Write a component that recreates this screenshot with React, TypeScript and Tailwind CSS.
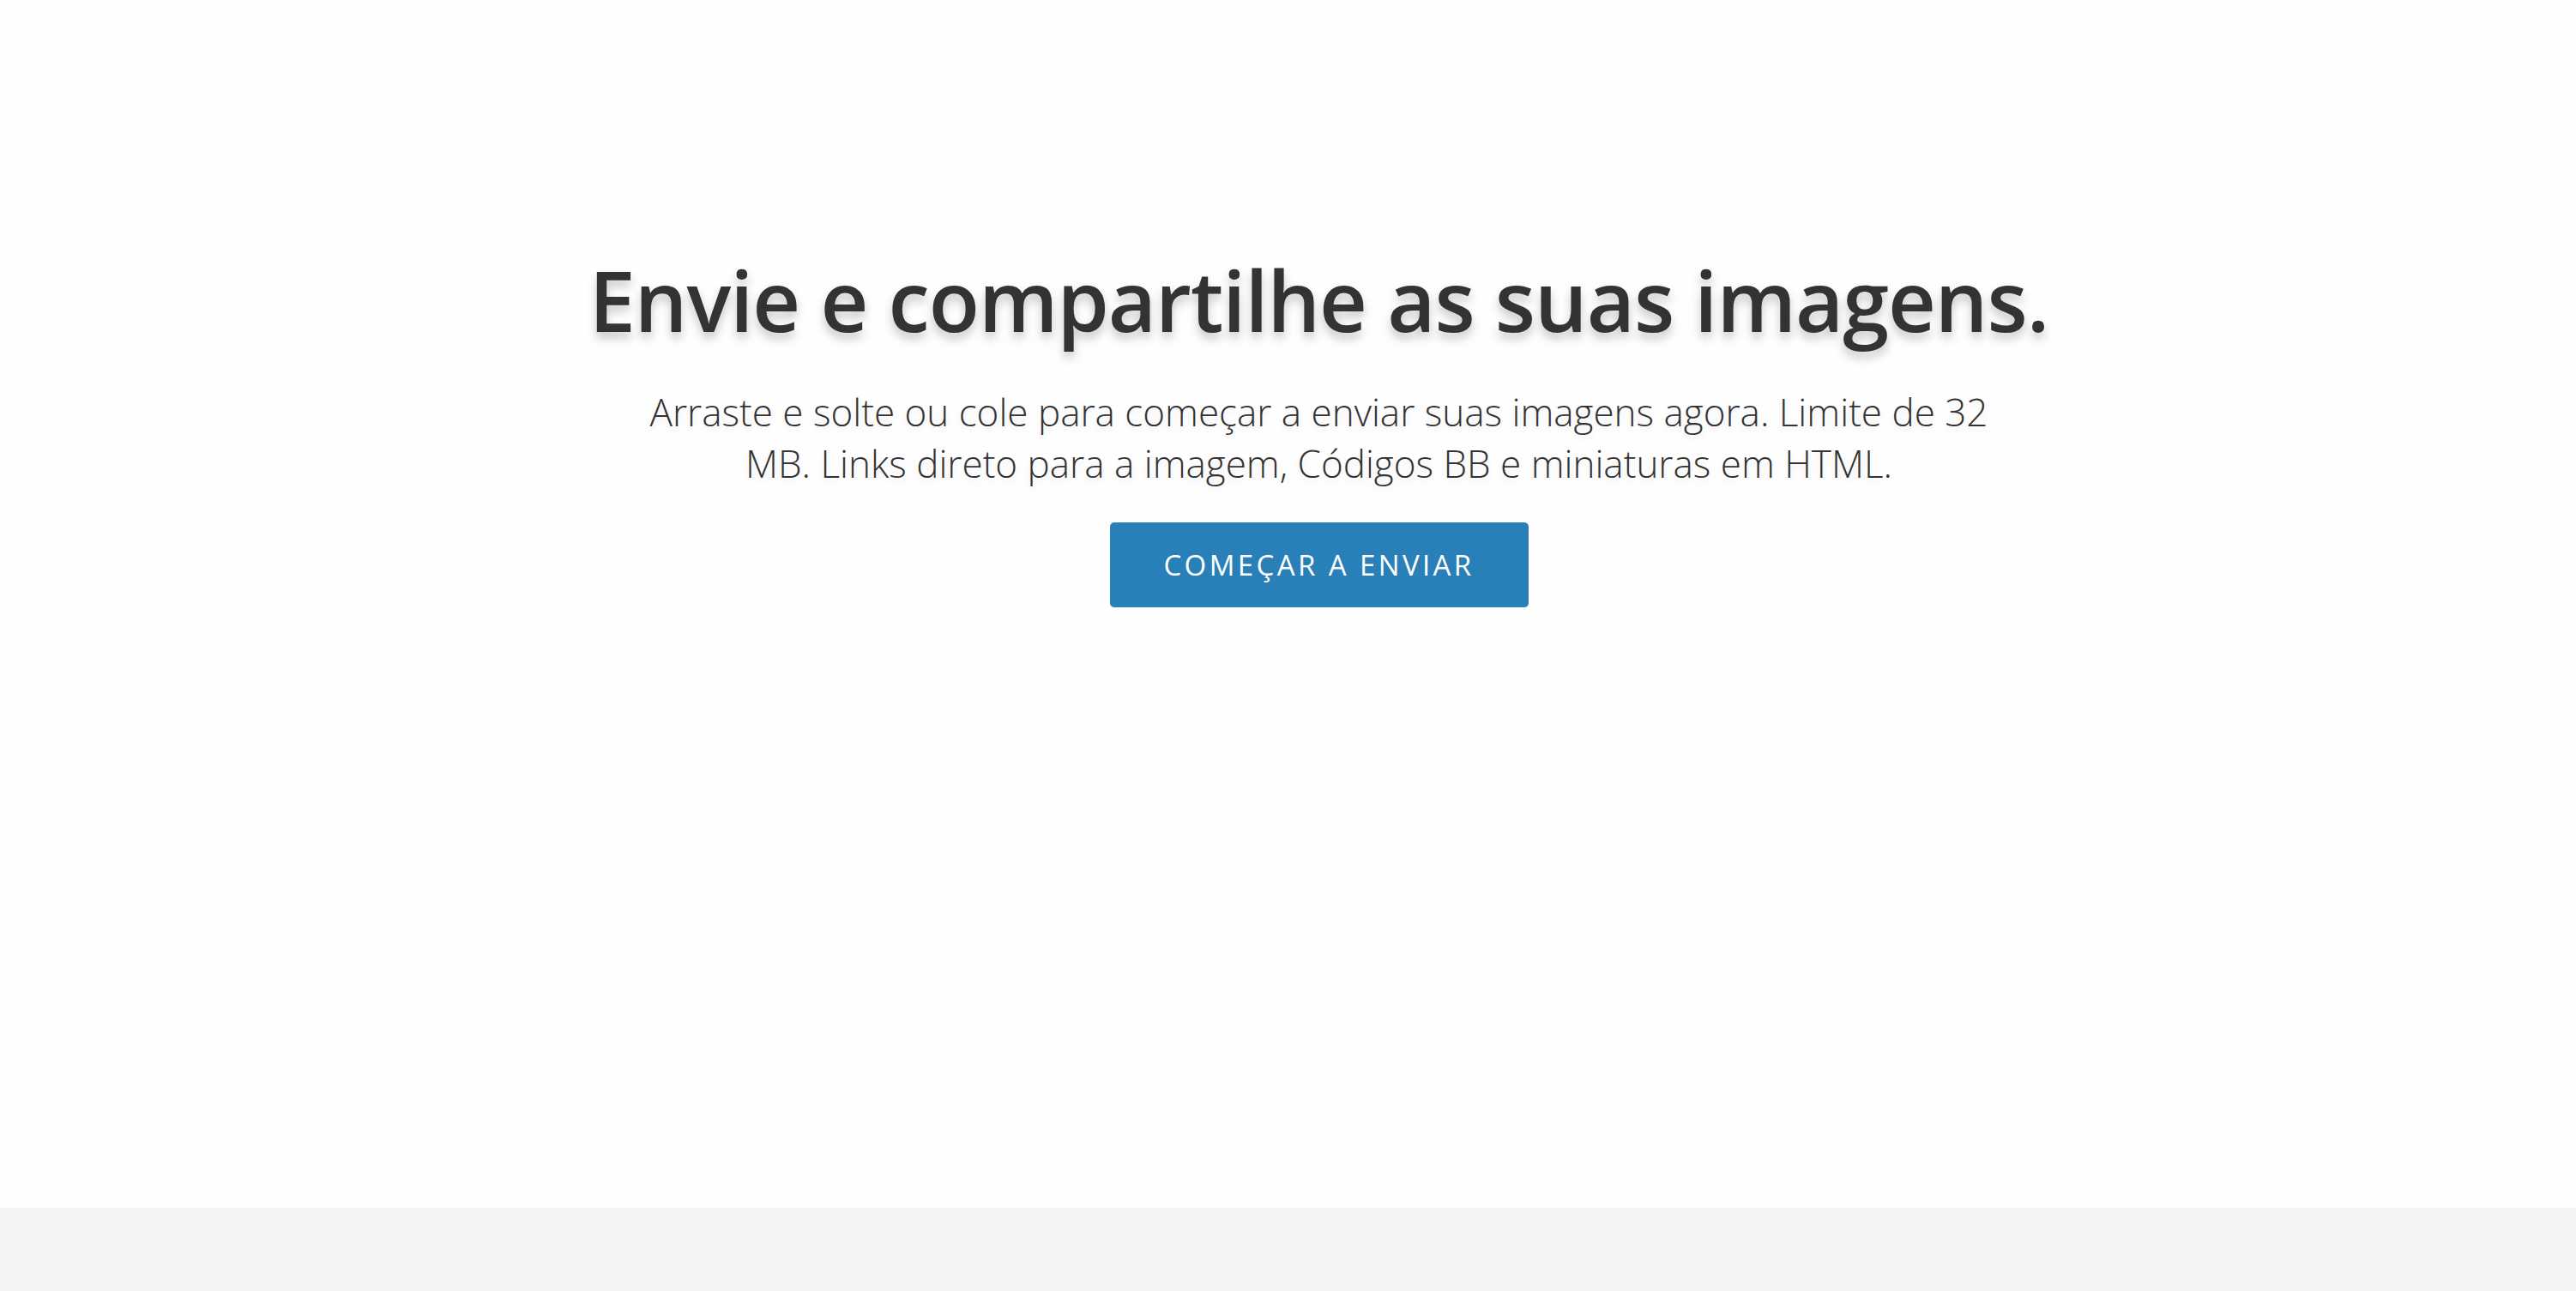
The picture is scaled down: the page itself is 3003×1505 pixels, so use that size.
import React from "react";

export default function App() {
  return (
    <div
      className="flex h-[1505px] w-full flex-col overflow-hidden bg-[#fefefe]"
      style={{ fontFamily: '"Open Sans", "Noto Sans", sans-serif' }}
    >
      <main className="flex h-[1408px] flex-col items-center pl-[72px] pt-[289px]">
        <h1 className="text-[97px] font-semibold leading-[120px] tracking-[-1px] text-[#333333] [text-shadow:0_7px_12px_rgba(0,0,0,0.22)]">
          Envie e compartilhe as suas imagens.
        </h1>
        <p className="mt-[41px] max-w-[1600px] text-center text-[44px] font-light leading-[60px] text-[#333333] [text-shadow:0_4px_8px_rgba(0,0,0,0.08)]">
          Arraste e solte ou cole para começar a enviar suas imagens agora. Limite de 32 MB. Links direto para a imagem, Códigos BB e miniaturas em HTML.
        </p>
        <button className="mt-[39px] flex h-[99px] w-[488px] items-center justify-center rounded-[5px] bg-[#2980b9] text-[33px] font-normal tracking-[3.4px] text-white">
          COMEÇAR A ENVIAR
        </button>
      </main>
      <footer className="flex-1 bg-[#f4f4f4]" />
    </div>
  );
}
